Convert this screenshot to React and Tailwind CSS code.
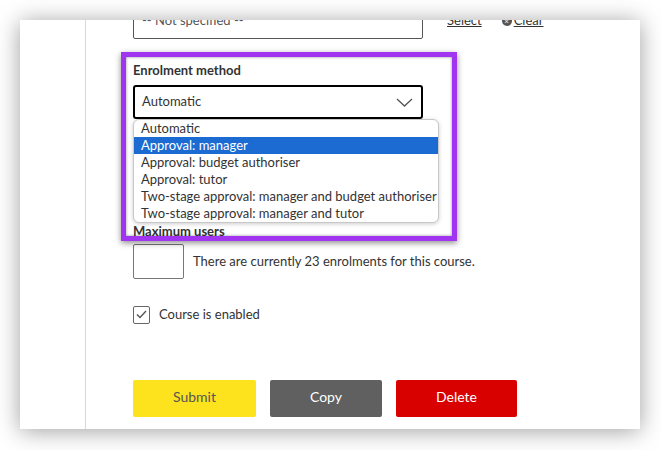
import React from "react";

const options = [
  "Automatic",
  "Approval: manager",
  "Approval: budget authoriser",
  "Approval: tutor",
  "Two-stage approval: manager and budget authoriser",
  "Two-stage approval: manager and tutor",
];

export default function App() {
  return (
    <div className="w-[661px] h-[450px] bg-white pt-[20px] pl-[20px] font-['Lato','Liberation_Sans',sans-serif] text-[#333]">
      <div className="relative w-[620px] h-[409px] bg-white overflow-hidden shadow-[0_2px_22px_rgba(0,0,0,0.38)] flex">
        {/* left column */}
        <div className="w-[66px] shrink-0 border-r border-[#d8d8d8]" />

        <div className="flex-1 pl-[47px] mt-[-15px]">
          {/* cut-off row */}
          <div className="flex items-center">
            <div className="w-[290px] h-[34px] border border-[#555] rounded-[2px] flex items-center px-[8px] pb-[2px] text-[13px] text-[#555]">
              -- Not specified --
            </div>
            <a className="ml-[24px] mb-[2px] text-[13px] underline text-[#333]">Select</a>
            <span className="ml-[20px] mb-[2px] w-[10px] h-[10px] rounded-full bg-[#555] flex items-center justify-center text-white text-[8px] leading-none">
              ×
            </span>
            <a className="ml-[2px] mb-[2px] text-[13px] underline text-[#333]">Clear</a>
          </div>

          {/* enrolment method */}
          <div className="relative mt-[23px]">
            <div className="text-[13px] font-bold leading-[16px]">Enrolment method</div>
            <div className="relative mt-[7px] w-[290px] h-[34px] border-2 border-black rounded-[3px] flex items-center justify-between pl-[7px] pr-[8px] text-[13px]">
              <span>Automatic</span>
              <svg width="17" height="9" viewBox="0 0 17 9" fill="none" stroke="#555" strokeWidth="1.3">
                <path d="M1 1l7.5 7 7.5-7" />
              </svg>
              <div className="absolute left-[-2px] top-[32px] w-[306px] bg-white border border-[#c8c8c8] rounded-[6px] overflow-hidden shadow-[0_1px_4px_rgba(0,0,0,0.2)] z-10">
                {options.map((o, i) => (
                  <div
                    key={o}
                    className={`h-[17px] leading-[16px] px-[7px] text-[13px] whitespace-nowrap ${
                      i === 1 ? "bg-[#1b6bd3] text-white" : "text-[#333]"
                    }`}
                  >
                    {o}
                  </div>
                ))}
              </div>
            </div>
          </div>

          {/* hidden fields under the menu */}
          <div className="h-[104px]" />

          <div className="text-[13px] font-bold leading-[16px]">Maximum users</div>
          <div className="mt-[5px] flex items-center">
            <div className="w-[51px] h-[35px] border border-[#777] rounded-[2px]" />
            <span className="ml-[9px] text-[13px]">There are currently 23 enrolments for this course.</span>
          </div>

          <div className="mt-[26px] flex items-center">
            <div className="w-[17px] h-[18px] border border-[#666] rounded-[2px] flex items-center justify-center">
              <svg width="11" height="9" viewBox="0 0 11 9" fill="none" stroke="#555" strokeWidth="1.4">
                <path d="M1 4.5l3 3 6-6.5" />
              </svg>
            </div>
            <span className="ml-[9px] text-[13px]">Course is enabled</span>
          </div>

          <div className="mt-[55px] flex gap-[14px]">
            <button className="w-[123px] h-[37px] pb-[3px] bg-[#fde21e] text-[#555] text-[14px] rounded-[2px]">Submit</button>
            <button className="w-[112px] h-[37px] pb-[3px] bg-[#606060] text-white text-[14px] rounded-[2px]">Copy</button>
            <button className="w-[121px] h-[37px] pb-[3px] bg-[#d90000] text-white text-[14px] rounded-[2px]">Delete</button>
          </div>
        </div>

        {/* highlight annotation */}
        <div className="absolute left-[101px] top-[32px] w-[336px] h-[189px] border-[5px] border-[#a034f0] shadow-[0_2px_6px_rgba(0,0,0,0.45),inset_0_0_3px_rgba(0,0,0,0.45)] pointer-events-none z-20" />
      </div>
    </div>
  );
}
